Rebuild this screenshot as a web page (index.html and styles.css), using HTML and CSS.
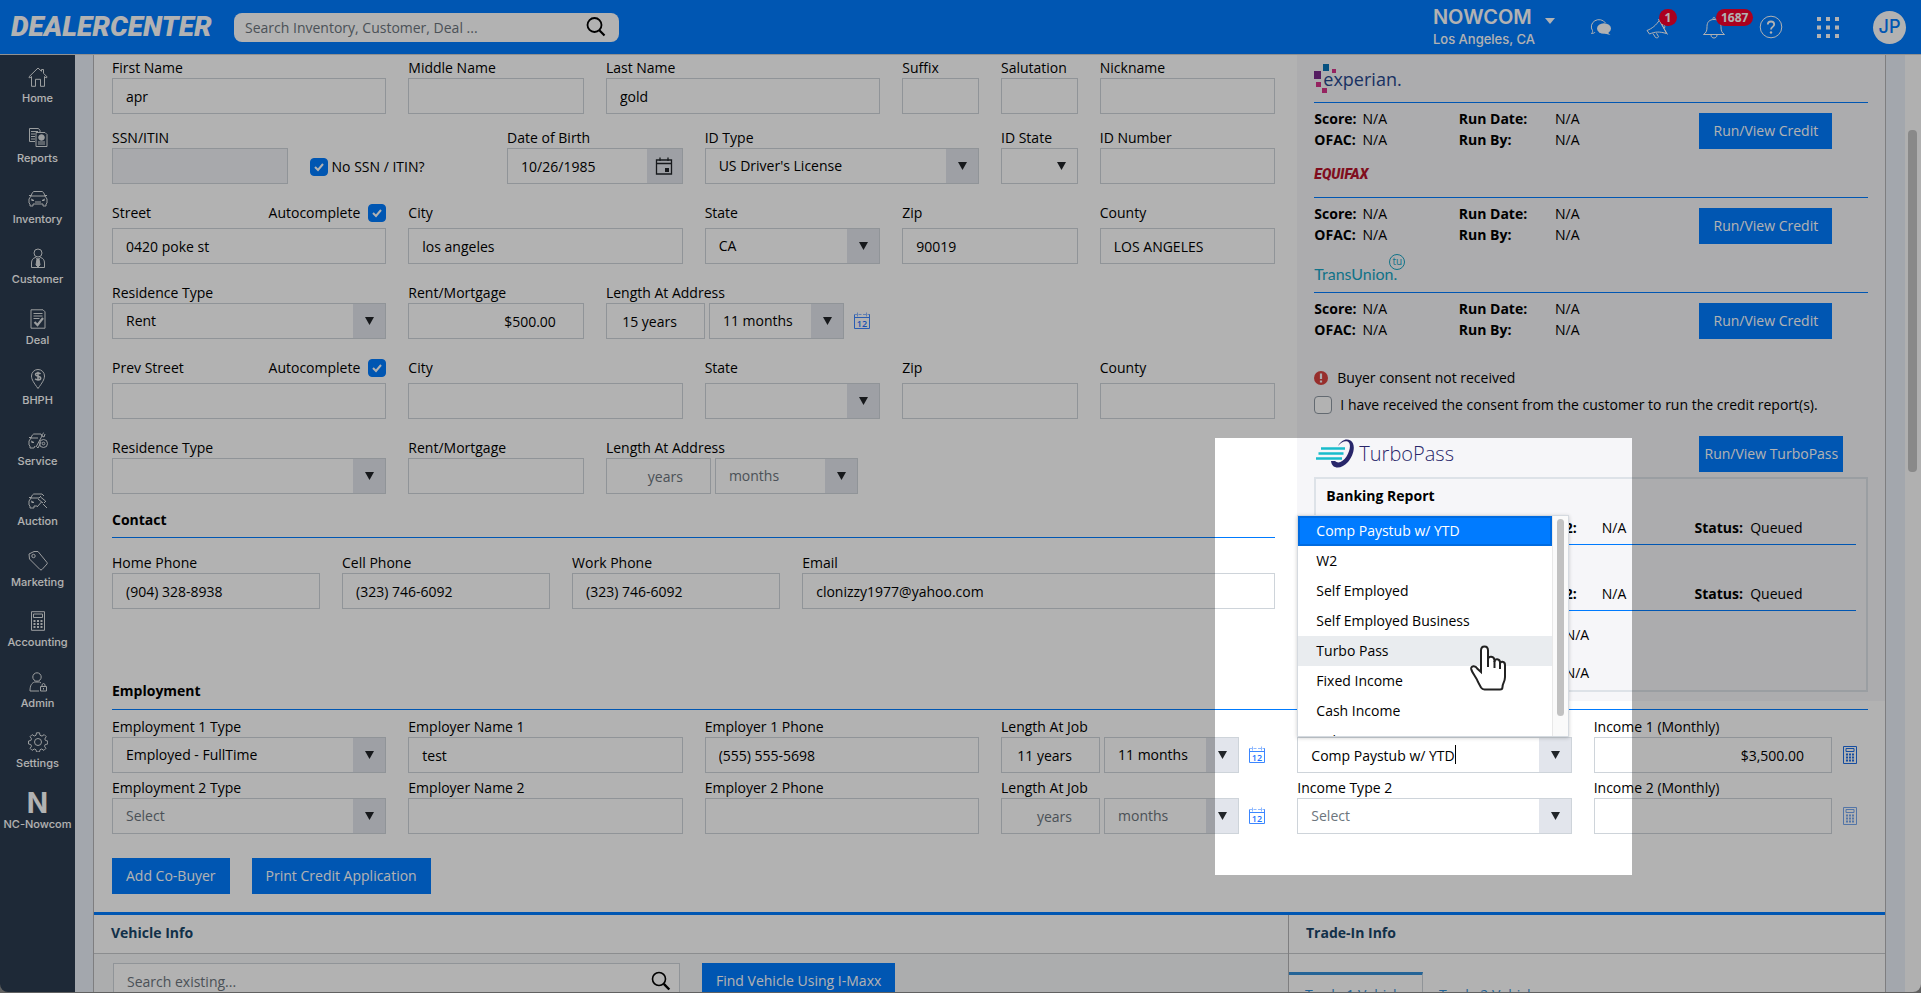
FILE: index.html
```html
<!doctype html>
<html lang="en">
    <head>
        <meta charset="UTF-8" />
        <meta name="viewport" content="width=device-width, initial-scale=1.0" />
        <title>DealerCenter - Credit Application</title>
        <link rel="stylesheet" href="styles.css">
    </head>
    <body>
        <svg class="sprite" aria-hidden="true">
            <symbol id="i-cal" viewBox="0 0 18 18">
                <path d="M1.500 5.500v11h15v-11zM1.500 2v4M16.500 2v4" fill="none" stroke="#3b86ff"/>
                <path d="M1 2.500h3M5.500 2.500h3M10 2.500h3M14.500 2.500h2M4.500.5v4M13.500.5v4" fill="none" stroke="#8db8ff"/>
                <text x="9" y="14.500" font-size="9" font-weight="600" text-anchor="middle" fill="#1f74ff">12</text>
            </symbol>
            <symbol id="i-calc" viewBox="0 0 14 18">
                <path d="M.5.500h13v17H.5zM3 2.500h8v3H3z" fill="none" stroke="currentColor"/>
                <path d="M3 8.500h8M3 11.500h8M3 14.500h8" fill="none" stroke="currentColor" stroke-width="2" stroke-dasharray="2 1"/>
            </symbol>
            <symbol id="i-search" viewBox="0 0 20 20">
                <circle cx="8" cy="8" r="6.500" fill="none" stroke="currentColor" stroke-width="1.600"/>
                <path d="M12.800 12.800l5.500 5.700" stroke="currentColor" stroke-width="2.400"/>
            </symbol>
        </svg>

        <div class="app">
            <header class="topbar">
                <a class="brand" href="#">DEALERCENTER</a>
                <form class="search">
                    <input type="text" aria-label="Search" placeholder="Search Inventory, Customer, Deal ..." />
                    <svg viewBox="0 0 20 20"><circle cx="8.500" cy="8" r="7" fill="none" stroke="#000" stroke-width="1.800"/><path d="M13.300 13.300l5.200 5.200" stroke="#000" stroke-width="2.200"/></svg>
                </form>
                <button class="dealer" type="button">
                    <span class="dealer-name">NOWCOM</span>
                    <span class="caret"></span>
                    <span class="dealer-city">Los Angeles, CA</span>
                </button>
                <div class="tools">
                    <button type="button" aria-label="Chat">
                        <svg viewBox="0 0 24 24"><path d="M3.500 18.500C4.500 17.500 4.800 16.500 4.500 15.600A7.500 7 0 1 1 17.500 8" fill="none" stroke="#fff"/><path d="M3.500 18.500c1.800 0 3-.6 3.700-1.500" fill="none" stroke="#fff"/><ellipse cx="16" cy="13.500" rx="7" ry="5.200" fill="#fff"/><path d="M19 17l3.500 3-6-1.500z" fill="#fff"/></svg>
                    </button>
                    <button type="button" aria-label="Announcements">
                        <svg viewBox="0 0 24 24"><path d="M2 15.500l2.500 3.500c6-2.500 10-2.500 17-.5L14.500 5C11 10.500 7 13.500 2 15.500zM13.500 4l9 15.500M17 9.500c2-.5 3.500 1.500 2.500 3.500M8 18.500l2.500 4c1.500.8 3 0 3-.8l-2-3.500" fill="none" stroke="#fff"/></svg>
                        <span class="badge">1</span>
                    </button>
                    <button type="button" aria-label="Alerts">
                        <svg viewBox="0 0 24 24"><path d="M1.500 19.500c3-2 3.500-4 3.500-8C5 7 7.500 4.500 12 4.500s7 2.500 7 7c0 4 .5 6 3.500 8zM9 20c0 4 6 4 6 0M11 4.500c-.5-3 2.500-3 2 0" fill="none" stroke="#fff"/></svg>
                        <span class="badge">1687</span>
                    </button>
                    <button type="button" aria-label="Help">
                        <svg viewBox="0 0 24 24"><circle cx="12" cy="12" r="10.800" fill="none" stroke="#fff"/><path d="M8.800 9.500c0-4 6.400-4 6.400 0 0 2.500-3.200 2.300-3.200 5" fill="none" stroke="#fff" stroke-width="1.800"/><circle cx="12" cy="17.500" r="1.200" fill="#fff"/></svg>
                    </button>
                    <button type="button" aria-label="Apps">
                        <svg viewBox="0 0 24 24"><path d="M1 4h22M1 12.500h22M1 21h22" stroke="#fff" stroke-width="4" stroke-dasharray="4 5"/></svg>
                    </button>
                    <button class="avatar" type="button">JP</button>
                </div>
            </header>

            <div class="shell">
                <nav class="sidebar">
                    <a href="#"><svg viewBox="0 0 20 20"><path d="M.8 10L10 1l3.500 3.300V2.500h2v3.800L19.200 10l-1 1-1.700-1.500v9.800h-4v-7h-5v7h-4V9.500L1.800 11z"/></svg>Home</a>
                    <a href="#"><svg viewBox="0 0 20 20"><path d="M7 14.500H1.500V1.500h9l1.500 2v2M3 4.500h7M3 7h4M3 9.500h4M3 12h4M8 5.500h9l2 2v12H8zM10 15h7M10 17h7"/><circle cx="13.500" cy="10.500" r="2.800" fill="currentColor"/></svg>Reports</a>
                    <a href="#"><svg viewBox="0 0 20 20"><path d="M3 8c1-3 2-4.500 3-4.500h8c1 0 2 1.500 3 4.500M3 8h14l2 3v4l-1 1v2h-3v-2H5v2H2v-2l-1-1v-4zM1 7.500h2M17 7.500h2M3 11l3 1.500H3.500M17 11l-3 1.500h2.500M7 14h6"/></svg>Inventory</a>
                    <a href="#"><svg viewBox="0 0 20 20"><circle cx="10" cy="5" r="4"/><path d="M3.500 19.500V15c0-3 1.500-5 4-5.500l2.500 2 2.500-2c2.500.5 4 2.500 4 5.500v4.500z"/><path d="M9 11h2l1 6-2 2-2-2z" fill="currentColor"/></svg>Customer</a>
                    <a href="#"><svg viewBox="0 0 20 20"><path d="M3 .8h12l2 2v16.400H3zM5.500 4.500h9M5.500 7h9M5.500 9.500h6"/><path d="M6.500 13l3 3L15 9" stroke-width="2.200"/></svg>Deal</a>
                    <a href="#"><svg viewBox="0 0 20 20"><path d="M10 19.500C6 14 3.500 10.500 3.500 7a6.500 6.500 0 0 1 13 0c0 3.500-2.500 7-6.500 12.500z"/><path d="M12.500 5c-1-1.500-5-1.500-5 .6C7.500 8 12.700 6.700 12.700 9.200c0 2-4.200 2.200-5.500.5M10 2.800v9" stroke-width="1.500"/></svg>BHPH</a>
                    <a href="#"><svg viewBox="0 0 20 20"><path d="M3 8c1-3 2-4 3-4h7l1 2M3 8h7M1 7.500h2M1 11l2-3M1 11v4l1 1v2h4l1-2M3 11l3 1.500H3.500M8 17l6-11c0-2 1-3 2-3M14 6l2 1 1-3M9 17l1 1 3-6"/><circle cx="15.500" cy="13.500" r="4"/><circle cx="15.500" cy="13.500" r="1.300"/></svg>Service</a>
                    <a href="#"><svg viewBox="0 0 20 20"><path d="M3 8c1-3 2-4 3-4h8l2 2M3 8h8M1 7.500h2M1 11l2-3M1 11v4l1 1v2h4v-2h3M3 11l3 1.500H3.500M10 9l5 4M12.500 7l5 4M11 8l2-2M16 13l2-2M13.500 12L9 17M15 14l4 4"/></svg>Auction</a>
                    <a href="#"><svg viewBox="0 0 20 20"><path d="M1 3l5-2.500h4L19 11.500q.5.800 0 1.500l-5 5.500q-1 1-2 0L1.500 8z"/><circle cx="5.500" cy="5" r="1.700"/></svg>Marketing</a>
                    <a href="#"><svg viewBox="0 0 20 20"><path d="M3.500.7h13v18.600h-13zM5.500 3h9v3.500h-9z"/><path d="M5.500 10h9M5.500 13h9M5.500 16h9" stroke-width="1.800" stroke-dasharray="2 1.500"/></svg>Accounting</a>
                    <a href="#"><svg viewBox="0 0 20 20"><circle cx="9" cy="5" r="4.200"/><path d="M11 19H2c0-6 2-8 4.500-9h5l1.500 1M12.500 14.500h6v4.500h-6zM14 14.500v-2q1.500-2 3 0v2M15.500 16v1.500"/></svg>Admin</a>
                    <a href="#"><svg viewBox="0 0 20 20"><circle cx="10" cy="10" r="3.500"/><path d="M8.500.8h3l.5 2.500 2 .8 2.200-1.500 2 2L16.800 7l.7 1.500 2.200.5v3l-2.500.5-.7 1.700 1.400 2.200-2 2-2.200-1.400-1.700.7-.5 2.200h-3L8 17.700l-1.700-.7-2.200 1.400-2-2 1.400-2.200-.7-1.700L.5 12V9l2.300-.5.7-1.700L2.100 4.600l2-2L6.300 4 8 3.300z"/></svg>Settings</a>
                    <a href="#"><span class="nav-letter">N</span>NC-Nowcom</a>
                </nav>

                <main class="page">
                    <div class="card">
                        <div class="buyer">
                            <div class="applicant">
                                <div class="row">
                                    <div class="field w3"><label for="firstName">First Name</label><input type="text" id="firstName" value="apr" /></div>
                                    <div class="field w2"><label for="middleName">Middle Name</label><input type="text" id="middleName" /></div>
                                    <div class="field w3"><label for="lastName">Last Name</label><input type="text" id="lastName" value="gold" /></div>
                                    <div class="field"><label for="suffix">Suffix</label><input type="text" id="suffix" /></div>
                                    <div class="field"><label for="salutation">Salutation</label><input type="text" id="salutation" /></div>
                                    <div class="field w2"><label for="nickname">Nickname</label><input type="text" id="nickname" /></div>
                                </div>

                                <div class="row">
                                    <div class="field w2"><label for="ssn">SSN/ITIN</label><input type="text" id="ssn" disabled /></div>
                                    <div class="check w2"><input type="checkbox" id="noSsn" checked /><label for="noSsn">No SSN / ITIN?</label></div>
                                    <div class="field w2">
                                        <label for="dob">Date of Birth</label>
                                        <div class="group">
                                            <input type="text" id="dob" value="10/26/1985" />
                                            <button class="addon" type="button" aria-label="Pick date">
                                                <svg viewBox="0 0 18 18"><path d="M1.500 3h15v14h-15zM1.500 6.500h15M5 .5V4M13 .5V4" fill="none" stroke="#212529" stroke-width="1.300"/><path d="M10 11h4v4h-4z" fill="#212529"/></svg>
                                            </button>
                                        </div>
                                    </div>
                                    <div class="field w3"><label for="idType">ID Type</label><select id="idType"><option>US Driver's License</option></select></div>
                                    <div class="field"><label for="idState">ID State</label><select class="plain" id="idState"><option></option></select></div>
                                    <div class="field w2"><label for="idNumber">ID Number</label><input type="text" id="idNumber" /></div>
                                </div>

                                <div class="row address">
                                    <div class="field w3">
                                        <div class="label-line"><label for="street">Street</label><label class="auto">Autocomplete <input type="checkbox" checked /></label></div>
                                        <input type="text" id="street" value="0420 poke st" />
                                    </div>
                                    <div class="field w3"><label for="city">City</label><input type="text" id="city" value="los angeles" /></div>
                                    <div class="field w2"><label for="state">State</label><select id="state"><option>CA</option></select></div>
                                    <div class="field w2"><label for="zip">Zip</label><input type="text" id="zip" value="90019" /></div>
                                    <div class="field w2"><label for="county">County</label><input type="text" id="county" value="LOS ANGELES" /></div>
                                </div>

                                <div class="row">
                                    <div class="field w3"><label for="residence">Residence Type</label><select id="residence"><option>Rent</option></select></div>
                                    <div class="field w2"><label for="rent">Rent/Mortgage</label><input class="num" type="text" id="rent" value="$500.00" /></div>
                                    <div class="field w4">
                                        <label for="years">Length At Address</label>
                                        <div class="length">
                                            <input class="num" type="text" id="years" value="15 years" />
                                            <select aria-label="Months at address"><option>11 months</option></select>
                                            <svg class="cal"><use href="#i-cal"/></svg>
                                        </div>
                                    </div>
                                </div>

                                <div class="row address">
                                    <div class="field w3">
                                        <div class="label-line"><label for="prevStreet">Prev Street</label><label class="auto">Autocomplete <input type="checkbox" checked /></label></div>
                                        <input type="text" id="prevStreet" />
                                    </div>
                                    <div class="field w3"><label for="prevCity">City</label><input type="text" id="prevCity" /></div>
                                    <div class="field w2"><label for="prevState">State</label><select id="prevState"><option></option></select></div>
                                    <div class="field w2"><label for="prevZip">Zip</label><input type="text" id="prevZip" /></div>
                                    <div class="field w2"><label for="prevCounty">County</label><input type="text" id="prevCounty" /></div>
                                </div>

                                <div class="row">
                                    <div class="field w3"><label for="prevResidence">Residence Type</label><select id="prevResidence"><option></option></select></div>
                                    <div class="field w2"><label for="prevRent">Rent/Mortgage</label><input class="num" type="text" id="prevRent" /></div>
                                    <div class="field w4">
                                        <label for="prevYears">Length At Address</label>
                                        <div class="length wide">
                                            <input class="num" type="text" id="prevYears" placeholder="years" />
                                            <select class="empty" aria-label="Months at previous address"><option>months</option></select>
                                        </div>
                                    </div>
                                </div>

                                <h3 class="section-title">Contact</h3>
                                <div class="row contact">
                                    <div class="field"><label for="homePhone">Home Phone</label><input type="text" id="homePhone" value="(904) 328-8938" /></div>
                                    <div class="field"><label for="cellPhone">Cell Phone</label><input type="text" id="cellPhone" value="(323) 746-6092" /></div>
                                    <div class="field"><label for="workPhone">Work Phone</label><input type="text" id="workPhone" value="(323) 746-6092" /></div>
                                    <div class="field"><label for="email">Email</label><input type="text" id="email" value="clonizzy1977@yahoo.com" /></div>
                                </div>

                                <h3 class="employment-title">Employment</h3>
                            </div>

                            <aside class="credit">
                                <section class="bureau">
                                    <div class="bureau-logo">
                                        <svg class="experian-dots" viewBox="0 0 24 30"><path fill="#0a74b8" d="M9 0h6v7H9z"/><path fill="#d6338a" d="M18 5h4v4h-4zM2 18h5v5H2zM8 24h5v5H8z"/><path fill="#7a2a8c" d="M0 7h7v8H0z"/></svg>
                                        <span class="experian">experian.</span>
                                    </div>
                                    <div class="bureau-info">
                                        <b>Score:</b><span>N/A</span><b>Run Date:</b><span>N/A</span>
                                        <button class="btn" type="button">Run/View Credit</button>
                                        <b>OFAC:</b><span>N/A</span><b>Run By:</b><span>N/A</span>
                                    </div>
                                </section>
                                <section class="bureau">
                                    <div class="bureau-logo"><span class="equifax">EQUIFAX</span></div>
                                    <div class="bureau-info">
                                        <b>Score:</b><span>N/A</span><b>Run Date:</b><span>N/A</span>
                                        <button class="btn" type="button">Run/View Credit</button>
                                        <b>OFAC:</b><span>N/A</span><b>Run By:</b><span>N/A</span>
                                    </div>
                                </section>
                                <section class="bureau">
                                    <div class="bureau-logo">
                                        <span class="transunion">TransUnion.</span>
                                        <span class="tu">tu</span>
                                    </div>
                                    <div class="bureau-info">
                                        <b>Score:</b><span>N/A</span><b>Run Date:</b><span>N/A</span>
                                        <button class="btn" type="button">Run/View Credit</button>
                                        <b>OFAC:</b><span>N/A</span><b>Run By:</b><span>N/A</span>
                                    </div>
                                </section>

                                <p class="consent-alert">
                                    <svg viewBox="0 0 14 14"><circle cx="7" cy="7" r="7" fill="#d9433f"/><path d="M7 2.500v5.500M7 9.500v2" stroke="#f6f6f9" stroke-width="2.200"/></svg>
                                    Buyer consent not received
                                </p>
                                <label class="consent"><input type="checkbox" />I have received the consent from the customer to run the credit report(s).</label>

                                <div class="turbo-head">
                                    <div class="turbo-logo">
                                        <svg viewBox="0 0 42 30"><path d="M24 7C27 1.500 32-1 36.500 1.500c6 4 3 15-2.500 21.500-6 7-16 8-17-1h4c3 3 8 1 11.500-4.500C36.500 11 37 4.500 34 2.800c-3-1.500-7 .7-10 4.200z" fill="#28266a"/><path d="M7 9.500h24M4.500 14.500h25M2 19.500h26" stroke="#19bccb" stroke-width="2.400"/></svg>
                                        TurboPass
                                    </div>
                                    <button class="btn" type="button">Run/View TurboPass</button>
                                </div>
                                <div class="report">
                                    <h4>Banking Report</h4>
                                    <div class="report-row"><b>2:</b><span>N/A</span><span><b>Status:</b>&nbsp; Queued</span></div>
                                    <div class="report-row second"><b>2:</b><span>N/A</span><span><b>Status:</b>&nbsp; Queued</span></div>
                                    <div class="report-total">N/A</div>
                                    <div class="report-total">N/A</div>
                                </div>
                            </aside>
                        </div>

                        <div class="employment">
                            <div class="jobs">
                                <div class="field"><label for="empType1">Employment 1 Type</label><select id="empType1"><option>Employed - FullTime</option></select></div>
                                <div class="field"><label for="empName1">Employer Name 1</label><input type="text" id="empName1" value="test" /></div>
                                <div class="field"><label for="empPhone1">Employer 1 Phone</label><input type="text" id="empPhone1" value="(555) 555-5698" /></div>
                                <div class="field">
                                    <label for="jobYears1">Length At Job</label>
                                    <div class="length">
                                        <input class="num" type="text" id="jobYears1" value="11 years" />
                                        <select aria-label="Months at job 1"><option>11 months</option></select>
                                        <svg class="cal"><use href="#i-cal"/></svg>
                                    </div>
                                </div>
                                <div class="field end">
                                    <div class="combo">
                                        <input type="text" aria-label="Income Type 1" role="combobox" aria-expanded="true" aria-controls="incomeList" value="Comp Paystub w/ YTD" />
                                        <span class="text-cursor"></span>
                                        <div class="menu">
                                            <ul id="incomeList" role="listbox">
                                                <li class="selected" role="option" aria-selected="true">Comp Paystub w/ YTD</li>
                                                <li role="option">W2</li>
                                                <li role="option">Self Employed</li>
                                                <li role="option">Self Employed Business</li>
                                                <li class="hover" role="option">Turbo Pass</li>
                                                <li role="option">Fixed Income</li>
                                                <li role="option">Cash Income</li>
                                                <li role="option">Military</li>
                                            </ul>
                                            <div class="menu-track"><div class="menu-thumb"></div></div>
                                        </div>
                                    </div>
                                </div>
                                <div class="field">
                                    <label for="income1">Income 1 (Monthly)</label>
                                    <div class="money"><input class="num" type="text" id="income1" value="$3,500.00" /><svg><use href="#i-calc"/></svg></div>
                                </div>

                                <div class="field"><label for="empType2">Employment 2 Type</label><select class="empty" id="empType2"><option>Select</option></select></div>
                                <div class="field"><label for="empName2">Employer Name 2</label><input type="text" id="empName2" /></div>
                                <div class="field"><label for="empPhone2">Employer 2 Phone</label><input type="text" id="empPhone2" /></div>
                                <div class="field">
                                    <label for="jobYears2">Length At Job</label>
                                    <div class="length">
                                        <input class="num" type="text" id="jobYears2" placeholder="years" />
                                        <select class="empty" aria-label="Months at job 2"><option>months</option></select>
                                        <svg class="cal"><use href="#i-cal"/></svg>
                                    </div>
                                </div>
                                <div class="field"><label for="incomeType2">Income Type 2</label><select class="empty" id="incomeType2"><option>Select</option></select></div>
                                <div class="field">
                                    <label for="income2">Income 2 (Monthly)</label>
                                    <div class="money off"><input class="num" type="text" id="income2" /><svg><use href="#i-calc"/></svg></div>
                                </div>
                            </div>
                            <div class="actions">
                                <button class="btn" type="button">Add Co-Buyer</button>
                                <button class="btn" type="button">Print Credit Application</button>
                            </div>
                        </div>

                        <div class="vehicles">
                            <section class="vehicle">
                                <h2>Vehicle Info</h2>
                                <div class="vehicle-body">
                                    <div class="lookup"><input type="text" aria-label="Search existing" placeholder="Search existing..." /><svg><use href="#i-search"/></svg></div>
                                    <button class="btn" type="button">Find Vehicle Using I-Maxx</button>
                                </div>
                            </section>
                            <section class="trade">
                                <h2>Trade-In Info</h2>
                                <div class="tabs"><a class="active" href="#">Trade 1 Vehicle</a><a href="#">Trade 2 Vehicle</a></div>
                            </section>
                        </div>
                    </div>
                </main>
                <div class="scrollbar"><div class="scroll-thumb"></div></div>
            </div>
        </div>

        <!-- walkthrough highlight -->
        <div class="spotlight"></div>
        <svg class="pointer" viewBox="0 0 36 46"><path d="M11 25V5.500C11 0 18 0 18 5.500V15c0-5 6.500-4 6.500.5V17c0-4 5.500-3.500 5.500.5v1.500c0-3.500 5-3 5 1V32c0 5-2.500 6-2.500 10 0 1.500-1 2.500-2.500 2.500H14.500c-1.500 0-2.500-.5-3.500-2L8 37c-1-4-6-9-6.800-13-.5-3 4-4 6-.5L11 27z" fill="#fff" stroke="#222" stroke-width="2"/><path d="M18 14v8M24.500 16v7M30 18v6" stroke="#222" stroke-width="2"/></svg>
    </body>
</html>
```
FILE: styles.css
```css
* {
    box-sizing: border-box;
    margin: 0;
    padding: 0;
}

body {
    font-family: 'Open Sans', 'Noto Sans', sans-serif;
    font-size: 14px;
    line-height: 20px;
    color: #000;
    background-color: #8c8c8c;
    height: 100vh;
    overflow: hidden;
}

button, input, select {
    font: inherit;
    color: inherit;
}

button {
    border: none;
    background: none;
    cursor: pointer;
}

a {
    color: inherit;
    text-decoration: none;
}

.sprite {
    display: block;
    width: 0;
    height: 0;
}

.app {
    height: calc(100vh - 1px);
    display: flex;
    flex-direction: column;
    border-radius: 0 0 8px 8px;
    overflow: hidden;
}

/* top bar */
.topbar {
    flex: 0 0 55px;
    display: flex;
    align-items: center;
    background-color: #007bff;
    border-bottom: 1px solid #d0d0d0;
    color: #fff;
    padding: 0 15px 0 11px;
}

.brand {
    width: 223px;
    font-family: Roboto, sans-serif;
    font-size: 28px;
    font-weight: 900;
    font-style: italic;
}

.search {
    width: 385px;
    display: flex;
    align-items: center;
    background-color: #fff;
    border-radius: 8px;
    padding: 0 13px 0 11px;
    margin-right: auto;
}

.search svg {
    width: 20px;
    height: 20px;
}

::placeholder {
    color: #6c757d;
    opacity: 1;
}

.dealer {
    display: grid;
    grid-template-columns: auto auto;
    column-gap: 10px;
    align-items: center;
    text-align: left;
    font-family: Inter, sans-serif;
    margin-right: 33px;
}

.dealer-name {
    font-size: 20px;
    font-weight: 600;
    line-height: 24px;
}

.dealer-city {
    font-size: 13px;
    font-weight: 500;
}

.caret {
    margin-top: 8px;
    border: 5px solid transparent;
    border-top: 6px solid #fff;
    border-bottom: none;
}

.tools {
    display: flex;
    align-items: center;
    gap: 33px;
}

.tools button {
    position: relative;
    width: 24px;
    height: 24px;
}

.tools svg {
    display: block;
    width: 24px;
    height: 24px;
}

.badge {
    position: absolute;
    left: 14px;
    top: -6px;
    min-width: 18px;
    padding: 0 5px;
    border-radius: 9px;
    background-color: #f5002d;
    font-size: 12px;
    font-weight: 700;
    line-height: 17px;
}

.tools .avatar {
    width: 33px;
    height: 33px;
    border-radius: 50%;
    background-color: #fff;
    color: #007bff;
    font-family: Inter, sans-serif;
    font-size: 18px;
    font-weight: 500;
}

/* side menu */
.shell {
    flex: 1;
    min-height: 0;
    display: flex;
}

.sidebar {
    flex: 0 0 75px;
    display: grid;
    grid-auto-rows: 60px 61px;
    align-content: start;
    background-color: #2c3c4f;
    color: #fff;
}

.sidebar a {
    display: flex;
    flex-direction: column;
    align-items: center;
    padding-top: 12px;
    font-family: Inter, sans-serif;
    font-size: 11px;
    font-weight: 500;
    line-height: 23px;
}

.sidebar svg {
    width: 20px;
    height: 20px;
    fill: none;
    stroke: currentColor;
    opacity: 0.85;
}

.nav-letter {
    font-size: 28px;
    font-weight: 700;
    line-height: 20px;
}

/* page */
.page {
    flex: 1;
    min-width: 0;
    background-color: #eaf0f8;
    padding: 0 19px 0 18px;
    overflow: hidden;
}

.card {
    background-color: #fff;
    border: 1px solid #b5b5b8;
    border-top: none;
}

.buyer {
    display: grid;
    grid-template-columns: repeat(3, minmax(0, 1fr));
    column-gap: 22px;
    padding: 0 17px 0 18px;
}

.applicant {
    grid-column: span 2;
    padding-top: 3px;
}

.row {
    display: grid;
    grid-template-columns: repeat(12, minmax(0, 1fr));
    column-gap: 22px;
    margin-bottom: 14px;
}

.row.contact {
    grid-template-columns: 208fr 208fr 208fr 473fr;
    margin-bottom: 0;
}

.w2 {
    grid-column: span 2;
}

.w3 {
    grid-column: span 3;
}

.w4 {
    grid-column: span 4;
}

.field {
    display: flex;
    flex-direction: column;
}

.field.end {
    justify-content: flex-end;
}

.address {
    margin-bottom: 19px;
}

.address label,
.label-line {
    line-height: 30px;
}

.label-line {
    display: flex;
    justify-content: space-between;
}

.auto {
    display: flex;
    align-items: center;
    gap: 8px;
}

input[type="text"],
select {
    width: 100%;
    min-width: 0;
    height: 36px;
    padding: 0 13px;
    border: 1px solid #ced4da;
    border-radius: 0;
    background-color: #fff;
    outline: none;
}

select {
    appearance: none;
    background-image: url("data:image/svg+xml,%3Csvg xmlns='http://www.w3.org/2000/svg' width='9' height='8'%3E%3Cpath d='M0 0h9L4.500 8z' fill='%23212529'/%3E%3C/svg%3E"), linear-gradient(#e2e5ec, #e2e5ec);
    background-position: right 11px center, right center;
    background-size: 9px 8px, 32px 100%;
    background-repeat: no-repeat;
}

select.plain {
    background-size: 9px 8px, 0 0;
}

select.empty {
    color: #6c757d;
}

input[type="text"]:disabled {
    background-color: #f1f3f7;
}

input.num {
    text-align: right;
    padding-right: 27px;
}

.search input[type="text"] {
    flex: 1;
    height: 29px;
    border: none;
    background: none;
    padding: 0;
}

input[type="checkbox"] {
    appearance: none;
    flex: 0 0 18px;
    height: 18px;
    border: 1px solid #8f99a3;
    border-radius: 4px;
    background-color: #fff;
}

input[type="checkbox"]:checked {
    border-color: #007bff;
    background: #007bff url("data:image/svg+xml,%3Csvg xmlns='http://www.w3.org/2000/svg' viewBox='0 0 16 16'%3E%3Cpath d='M4 8l3 3 5-6' fill='none' stroke='white' stroke-width='2'/%3E%3C/svg%3E");
}

.check {
    display: flex;
    align-items: center;
    gap: 4px;
    padding-top: 22px;
}

.group {
    display: flex;
}

.group input[type="text"] {
    border-right: none;
}

.addon {
    flex: 0 0 36px;
    height: 36px;
    border: 1px solid #ced4da;
    border-left: none;
    background-color: #e2e5ec;
}

.addon svg {
    display: block;
    width: 18px;
    height: 18px;
    margin: 0 auto;
}

.length {
    display: flex;
    align-items: center;
    gap: 4px;
}

.length input[type="text"] {
    flex: 0 0 99px;
    width: 99px;
}

.length select {
    flex: 0 0 135px;
    width: 135px;
}

.length.wide input[type="text"] {
    flex-basis: 105px;
}

.length.wide select {
    flex-basis: 143px;
}

.cal {
    width: 18px;
    height: 18px;
    margin-left: 5px;
}

.section-title,
.employment-title {
    font-size: 14px;
    font-weight: 700;
}

.section-title {
    line-height: 24px;
    padding-bottom: 5px;
    margin-bottom: 15px;
    border-bottom: 1px solid #007bff;
}

.employment-title {
    margin-top: 72px;
}

/* credit bureaus */
.credit {
    align-self: start;
    margin-right: -17px;
    padding: 1px 17px 9px;
    background-color: #f6f6f9;
}

.bureau-logo {
    height: 46px;
    display: flex;
    align-items: center;
}

.bureau-info {
    display: grid;
    grid-template-columns: 2fr 4fr 4fr 6fr 7fr;
    grid-template-rows: 21px 21px;
    align-items: center;
    padding: 5px 0 1px;
    border-top: 1px solid #007bff;
}

.bureau-info .btn {
    grid-column: 5;
    grid-row: 1 / span 2;
    justify-self: start;
    margin-top: 4px;
}

.experian-dots {
    width: 24px;
    height: 30px;
}

.experian {
    margin-left: -15px;
    font-family: 'Open Sans', sans-serif;
    font-size: 18px;
    color: #26478d;
}

.equifax {
    font-family: Roboto, sans-serif;
    font-size: 14px;
    font-style: italic;
    font-weight: 900;
    color: #b8142c;
}

.transunion {
    font-family: Lato, sans-serif;
    font-size: 16px;
    color: #18a5c4;
    padding-top: 10px;
}

.tu {
    width: 16px;
    height: 16px;
    margin: -14px 0 0 -8px;
    border: 1px solid #18a5c4;
    border-radius: 50%;
    font-size: 10px;
    line-height: 13px;
    text-align: center;
    color: #18a5c4;
}

.btn {
    height: 36px;
    padding: 0 14px;
    background-color: #007bff;
    color: #fff;
    white-space: nowrap;
}

.btn:hover {
    background-color: #0069d9;
}

.consent-alert {
    display: flex;
    align-items: center;
    gap: 9px;
    margin-top: 27px;
}

.consent-alert svg {
    width: 14px;
    height: 14px;
}

.consent {
    display: flex;
    align-items: center;
    gap: 8px;
    margin-top: 7px;
    white-space: nowrap;
}

.turbo-head {
    display: grid;
    grid-template-columns: 16fr 7fr;
    align-items: center;
    margin-top: 21px;
}

.turbo-head .btn {
    justify-self: start;
    padding: 0 5px;
}

.turbo-logo {
    display: flex;
    align-items: center;
    font-family: 'Open Sans', sans-serif;
    font-size: 20px;
    font-weight: 300;
    color: #28266a;
}

.turbo-logo svg {
    width: 42px;
    height: 30px;
    margin-right: 3px;
}

.report {
    margin-top: 5px;
    padding: 7px 10px;
    border: 2px solid #dde2e8;
}

.report h4 {
    font-size: 14px;
    margin-bottom: 12px;
}

.report-row {
    display: grid;
    grid-template-columns: 104fr 35fr 61fr;
    padding-bottom: 6px;
    border-bottom: 1px solid #007bff;
}

.report-row.second {
    margin-top: 39px;
    margin-bottom: 7px;
}

.report-row > b {
    text-align: right;
    padding-right: 25px;
}

.report-total {
    padding: 7px 0 11px 45%;
}

.report-total:last-child {
    padding-bottom: 0;
}

/* employment */
.employment {
    margin: 8px 17px 0 18px;
    border-top: 1px solid #007bff;
    padding: 7px 0 18px;
}

.jobs {
    display: grid;
    grid-template-columns: repeat(6, minmax(0, 1fr));
    gap: 5px 22px;
}

.combo {
    position: relative;
}

.combo > input {
    display: block;
}

.combo input[type="text"] {
    background: #fff url("data:image/svg+xml,%3Csvg xmlns='http://www.w3.org/2000/svg' width='32' height='34'%3E%3Cpath d='M0 0h32v34H0z' fill='%23e2e5ec'/%3E%3Cpath d='M12 13h9l-4.500 8z' fill='%23212529'/%3E%3C/svg%3E") right center no-repeat;
}

.text-cursor {
    position: absolute;
    left: 158px;
    top: 8px;
    width: 1px;
    height: 19px;
    background-color: #000;
}

.menu {
    position: absolute;
    left: 0;
    bottom: 100%;
    width: 272px;
    height: 222px;
    display: flex;
    overflow: hidden;
    background-color: #fff;
    border: 1px solid #d5dae0;
    box-shadow: 0 1px 4px rgba(0, 0, 0, 0.2);
}

.menu ul {
    flex: 1;
    list-style: none;
}

.menu li {
    height: 30px;
    line-height: 30px;
    padding-left: 18px;
}

.menu .selected {
    background-color: #007bff;
    color: #fff;
    box-shadow: inset 0 0 0 2px #006be0;
}

.menu .hover {
    background-color: #e9ecef;
}

.menu-track {
    width: 16px;
    padding: 3px 4px;
    background-color: #fafafa;
    border-left: 1px solid #e8e8e8;
}

.menu-thumb {
    height: 92%;
    border-radius: 4px;
    background-color: #c1c1c1;
}

.money {
    display: flex;
    align-items: center;
    gap: 11px;
    padding-right: 11px;
    color: #1f6fe5;
}

.money input {
    color: #000;
}

.money svg {
    flex: 0 0 14px;
    height: 18px;
}

.money.off svg {
    opacity: 0.6;
}

.actions {
    display: flex;
    gap: 22px;
    margin-top: 24px;
}

/* vehicles */
.vehicles {
    display: grid;
    grid-template-columns: 2fr 1fr;
    border-top: 3px solid #007bff;
}

.vehicles h2 {
    height: 39px;
    padding-left: 17px;
    border-bottom: 1px solid #c8cacd;
    font-size: 14px;
    line-height: 36px;
    color: #194669;
}

.vehicle {
    background-color: #f7f8fa;
}

.vehicle h2 {
    background-color: #fff;
}

.vehicle-body {
    display: flex;
    gap: 22px;
    padding: 9px 19px;
}

.lookup {
    width: 567px;
    display: flex;
    align-items: center;
    padding-right: 8px;
    border: 1px solid #ced4da;
    background-color: #fff;
}

.lookup input[type="text"] {
    height: 34px;
    border: none;
}

.lookup svg {
    flex: 0 0 20px;
    height: 20px;
}

.trade {
    border-left: 1px solid #b5b5b8;
}

.tabs {
    display: flex;
    padding-top: 18px;
    color: #3490d8;
}

.tabs a {
    padding: 10px 16px;
    border-top: 3px solid transparent;
}

.tabs .active {
    width: 134px;
    white-space: nowrap;
    border-top-color: #3490d8;
    border-right: 1px solid #ced4da;
}

.scrollbar {
    flex: 0 0 16px;
    padding: 75px 4px 0 3px;
    background-color: #fcfcfc;
}

.scroll-thumb {
    height: 342px;
    border-radius: 4px;
    background-color: #c4c4c4;
}

/* dims everything outside the highlighted area */
.spotlight {
    position: absolute;
    left: 1215px;
    top: 438px;
    width: 417px;
    height: 437px;
    box-shadow: 0 0 0 2000px rgba(0, 0, 0, 0.3);
    pointer-events: none;
}

.pointer {
    position: absolute;
    left: 1470px;
    top: 645px;
    width: 36px;
    height: 46px;
}
```
